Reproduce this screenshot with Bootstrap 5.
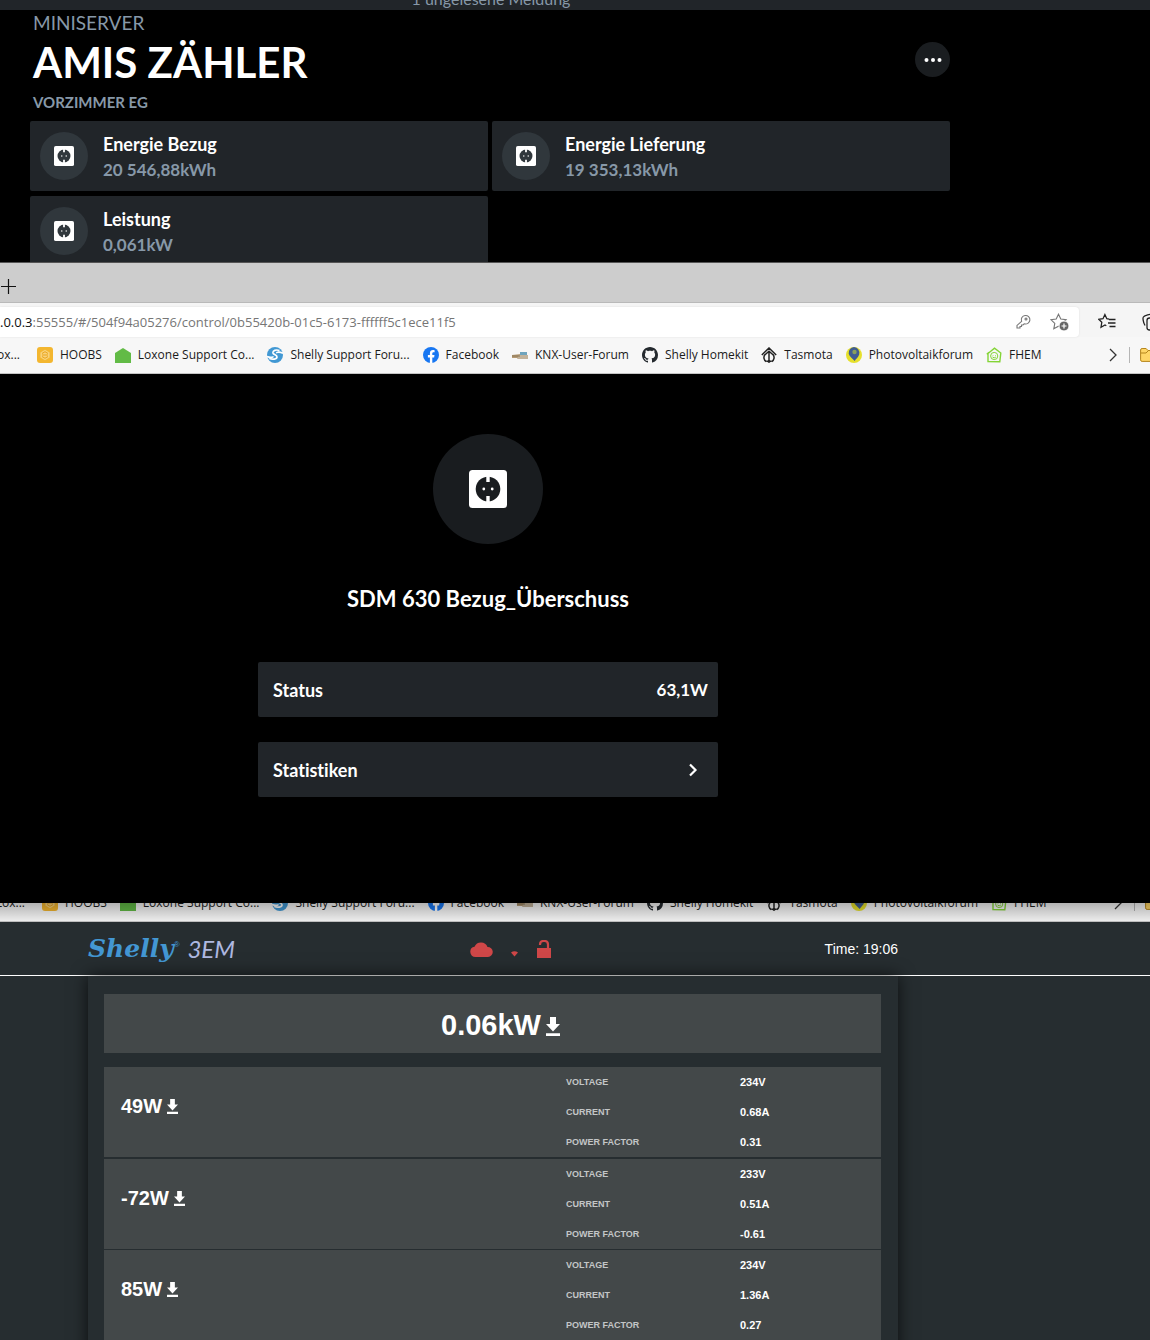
<!DOCTYPE html>
<html lang="de">
<head>
<meta charset="utf-8">
<meta name="viewport" content="width=device-width, initial-scale=1">
<title>AMIS Zähler</title>
<link href="https://cdn.jsdelivr.net/npm/bootstrap@5.3.0/dist/css/bootstrap.min.css" rel="stylesheet">
<style>
  body { background: #000; font-family: Lato, "Open Sans", sans-serif; font-variant-ligatures: none; }
  .shrink-none { flex: none; }

  /* Loxone app */
  .lox-app { height: 262px; }
  .notice-strip { height: 10px; background: #212529; color: #8798a8; font-size: 16px; line-height: 22px; padding-right: 168px; }
  .lox-main { max-width: 920px; margin-left: 30px; }
  .lox-head { height: 111px; padding: 1px 0 0 3px; color: #8798a8; }
  .kicker { font-size: 19px; line-height: 24px; }
  .lox-head h1 { font-size: 42px; line-height: 54px; font-weight: 700; color: #fff; margin: 0; }
  .room { font-size: 15px; line-height: 26px; font-weight: 700; }
  .more-btn { width: 35px; height: 35px; background: #1a1d20; color: #fff; margin-top: 31px; }
  .tile-grid { display: grid; grid-template-columns: 1fr 1fr; gap: 5px 4px; }
  .tile { height: 70px; padding: 0 10px; gap: 15px; background: #212529; border-radius: 2px; font-size: 18px; line-height: 25px; font-weight: 700; color: #fff; }
  .tile-text { padding-top: 2px; }
  .tile-value { color: #8798a8; font-size: 17px; }
  .disc { width: 48px; height: 48px; background: #30373c; color: #30373c; }
  .disc-lg { width: 110px; height: 110px; background: #191c1f; color: #191c1f; }
  .socket { width: 20px; height: 20px; }
  .disc-lg .socket { width: 38px; height: 38px; }

  /* Browser window */
  .chrome-font { font-family: "Open Sans", "Noto Sans", sans-serif; }
  .tab-strip { height: 41px; background: #cdcdcd; border-top: 1px solid #555; border-bottom: 1px solid #b9b9b9; padding-top: 6px; }
  .tab-strip button { width: 17px; }
  .tool-row { height: 34px; background: #f5f5f5; padding-top: 4px; }
  .address { background: #fff; border-radius: 0 4px 4px 0; font-size: 13px; line-height: 30px; color: #111; padding-right: 10px; box-shadow: 0 0 2px #ddd; }
  .address input { color: #767676; font-size: 13px; line-height: 30px; }
  .address input:focus { outline: 1px solid #8ab4f8; }
  .address-icons { gap: 18px; }
  .tool-icons { width: 71px; padding-left: 19px; gap: 25px; }
  .bookmarks { height: 37px; background: #f7f7f7; border-bottom: 1px solid #c4c4c4; font-size: 12px; line-height: 16px; }
  .bookmarks a { color: #1b1b1b; gap: 7px; margin-left: 13px; }
  .bookmarks a.cut-left { width: 20px; margin: 0 4px 0 0; }
  .bookmarks svg { flex: none; }
  .bm-end { width: 43px; gap: 10px; }
  .bm-rule { width: 1px; height: 16px; background: #b5b5b5; }
  .stage { height: 529px; padding-top: 60px; background: #000; color: #fff; }
  .stage-col { max-width: 460px; margin-left: 258px; }
  .stage-col h2 { font-size: 22px; line-height: 28px; font-weight: 700; margin: 41px 0 49px; }
  .stage-row { height: 55px; padding: 1px 10px 0 15px; margin-bottom: 25px; background: #212529; border-radius: 2px; font-size: 18px; font-weight: 700; color: #fff; }
  .stage-value { font-size: 17px; }

  /* Window behind */
  .rear-strip { height: 19px; position: relative; }
  .rear-strip::after { content: ""; position: absolute; inset: 0; background: linear-gradient(rgba(0,0,0,.28), rgba(0,0,0,.03)); pointer-events: none; }
  .rear-strip .bookmarks { margin-right: -5px; }
  .rear-strip .bookmarks a.cut-left { width: 25px; }

  /* Shelly page */
  .shelly { background: #262d30; color: #fff; font-family: "Liberation Sans", Arial, sans-serif; min-height: 0; }
  .shelly-head { height: 54px; border-bottom: 1px solid #fff; }
  .shelly-in { max-width: 810px; margin-left: 88px; }
  .brand { width: 147px; }
  .brand-word { font: italic 700 25px/36px "DejaVu Serif", serif; color: #4397d3; }
  .brand-reg { font-size: 8px; line-height: 8px; color: #4397d3; margin-top: 10px; }
  .brand-model { font: italic 400 24px/36px Lato, sans-serif; color: #aeb8e0; }
  .status-icons { margin-left: 235px; gap: 15px; color: #cf4748; }
  .clock { font-size: 14px; padding-top: 2px; }
  .meter-card { padding: 18px 17px 0 16px; background: #262d30; box-shadow: 0 0 16px rgba(0,0,0,.7); position: relative; }
  .total-box { height: 59px; padding: 5px 0 0 16px; gap: 5px; background: #434849; font-size: 29px; font-weight: 700; margin-bottom: 14px; }
  .phase { height: 90px; background: #434849; margin-bottom: 2px; }
  .phase:last-child { margin: -1px 0 0; }
  .phase-power { padding: 24px 0 0 17px; gap: 5px; font-size: 20px; line-height: 30px; font-weight: 700; }
  .readings { width: 315px; font-size: 11px; line-height: 30px; font-weight: 700; }
  .readings th, .readings td { padding: 0; height: 30px; }
  .readings th { width: 174px; font-size: 9px; color: #c3c6c7; }
</style>
<script src="https://cdn.jsdelivr.net/npm/bootstrap@5.3.0/dist/js/bootstrap.bundle.min.js"></script>
</head>
<body class="d-flex flex-column vh-100 overflow-hidden">

<svg class="d-none" aria-hidden="true">
  <symbol id="i-socket" viewBox="0 0 38 38"><rect width="38" height="38" rx="3.5" fill="#fff"/><circle cx="19" cy="19" r="12.3" fill="currentColor"/><path d="M17.3 5h3.4v7h-3.4zM17.3 26h3.4v7h-3.4z" fill="#fff"/><circle cx="14.8" cy="19" r="1.4" fill="#fff"/><circle cx="23.2" cy="19" r="1.4" fill="#fff"/></symbol>
  <symbol id="i-down" viewBox="0 0 14 19"><path d="M4 0h6v7h4l-7 7.5L0 7h4zM0 16.2h14V19H0z" fill="#fff"/></symbol>
  <symbol id="i-hoobs" viewBox="0 0 16 16"><rect width="16" height="16" rx="3" fill="#f3b62f"/><path d="M8 2.8l4.6 2.6v5.2L8 13.2l-4.6-2.6V5.4z" fill="#f9d27a"/><path d="M5 6.5l3-1.8 3 1.8M5 9.5l3 1.8 3-1.8M5 8h6" stroke="#e9a41b" fill="none"/></symbol>
  <symbol id="i-lox" viewBox="0 0 16 16"><path d="M8 1l8 5v10H0V6z" fill="#62bb46"/></symbol>
  <symbol id="i-shelly" viewBox="0 0 16 16"><circle cx="8" cy="8" r="8" fill="#4198d3"/><path d="M12.5 3.5C9 2.3 5.600 3.500 6 6c.4 2 4 1.800 4 4 0 2.200-4.500 2.800-8 1.300M16 6.200C12.500 4.500 9.500 5 9.800 6.200M0 9.600c3 1.200 6 1 6.200-.3" fill="none" stroke="#fff" stroke-width="1.7"/></symbol>
  <symbol id="i-fb" viewBox="0 0 16 16"><circle cx="8" cy="8" r="8" fill="#1877f2"/><path d="M6.900 16v-5.600H4.900V8h2V6.300c0-2 1.200-3.200 3-3.200.9 0 1.700.2 1.700.2v2h-1c-1 0-1.300.6-1.300 1.200V8h2.200l-.4 2.400H9.300V16z" fill="#fff"/></symbol>
  <symbol id="i-knx" viewBox="0 0 16 16"><path d="M0 8l9-1v4H0z" fill="#b59a74"/><path d="M8 5h7v3H8z" fill="#6fa4bd"/><path d="M7 8h9v4H5z" fill="#c2b29a"/><path d="M0 9h8" stroke="#8a7657"/></symbol>
  <symbol id="i-gh" viewBox="0 0 16 16"><path fill="#24292e" d="M8 0C3.580 0 0 3.580 0 8c0 3.540 2.290 6.530 5.470 7.590.4.070.55-.17.55-.38 0-.19-.01-.82-.01-1.490-2.010.37-2.530-.49-2.690-.94-.09-.23-.48-.94-.82-1.130-.28-.15-.68-.52-.01-.53.63-.01 1.080.58 1.230.82.72 1.210 1.870.87 2.330.66.070-.52.28-.87.51-1.070-1.780-.2-3.640-.89-3.640-3.950 0-.87.31-1.590.82-2.150-.08-.2-.36-1.020.08-2.120 0 0 .67-.21 2.200.82.64-.18 1.320-.27 2-.27s1.360.09 2 .27c1.530-1.040 2.200-.82 2.200-.82.44 1.100.16 1.920.08 2.120.51.56.82 1.270.82 2.150 0 3.070-1.870 3.750-3.650 3.950.29.25.54.73.54 1.480 0 1.070-.01 1.930-.01 2.200 0 .21.15.46.55.38A8.010 8.010 0 0 0 16 8c0-4.420-3.580-8-8-8"/></symbol>
  <symbol id="i-tas" viewBox="0 0 16 16"><path d="M.8 8L8 1l7.200 7M5.200 14.600A4.800 4.800 0 0 1 4 7.500M10.800 14.600A4.800 4.800 0 0 0 12 7.500M8 5.500V16M4 7.800l4-3.600 4 3.600M5.500 14l2.500.8 2.500-.8" fill="none" stroke="#222" stroke-width="1.500"/></symbol>
  <symbol id="i-pv" viewBox="0 0 16 16"><circle cx="8" cy="8" r="8" fill="#e6e02c"/><path d="M8 0a6 6 0 0 1 5.200 7.500C12.300 10.600 9.600 12 8.700 14 6.500 11.500 3.400 9.700 2.700 6.700A5.800 5.800 0 0 1 8 0z" fill="#3f5c92"/><circle cx="8.500" cy="5" r="2.200" fill="#8aa05b"/></symbol>
  <symbol id="i-fhem" viewBox="0 0 16 16"><path d="M2 6.500L8.500 1.200 14.800 6l-1 8.800L2 14.500zM.8 7.200L3 5.200" fill="none" stroke="#84d436" stroke-width="1.400"/><circle cx="8.200" cy="9" r="3.600" fill="none" stroke="#84d436"/><path d="M6.500 10q1.700 1.700 3.400 0M7 8v.6M9.500 8v.6" fill="none" stroke="#84d436"/></symbol>
  <symbol id="i-chev" viewBox="0 0 12 16"><path d="M3 2l6 6-6 6" fill="none" stroke="#333" stroke-width="1.300"/></symbol>
  <symbol id="i-folder" viewBox="0 0 18 16"><path d="M.6 3q0-1.500 1.500-1.500h4L8 3.500h8q1.400 0 1.400 1.400v8q0 1.500-1.500 1.500H2.100Q.6 14.400.6 12.900z" fill="#ffd667" stroke="#b5851c"/><path d="M1 6h5l2-2" fill="none" stroke="#b5851c"/></symbol>
</svg>

<section class="lox-app shrink-none overflow-hidden">
  <div class="notice-strip d-flex align-items-end justify-content-center overflow-hidden"><span>1 ungelesene Meldung</span></div>
  <main class="lox-main">
    <header class="lox-head d-flex justify-content-between">
      <div>
        <div class="kicker">MINISERVER</div>
        <h1>AMIS ZÄHLER</h1>
        <div class="room">VORZIMMER EG</div>
      </div>
      <button type="button" class="more-btn btn rounded-circle border-0 p-0 d-flex align-items-center justify-content-center" aria-label="Mehr">
        <svg width="18" height="4" viewBox="0 0 18 4" fill="currentColor"><circle cx="2.500" cy="2" r="2"/><circle cx="9" cy="2" r="2"/><circle cx="15.500" cy="2" r="2"/></svg>
      </button>
    </header>
    <div class="tile-grid">
      <div class="tile d-flex align-items-center">
        <span class="disc rounded-circle d-flex align-items-center justify-content-center"><svg class="socket"><use href="#i-socket"/></svg></span>
        <div class="tile-text"><div>Energie Bezug</div><div class="tile-value">20 546,88kWh</div></div>
      </div>
      <div class="tile d-flex align-items-center">
        <span class="disc rounded-circle d-flex align-items-center justify-content-center"><svg class="socket"><use href="#i-socket"/></svg></span>
        <div class="tile-text"><div>Energie Lieferung</div><div class="tile-value">19 353,13kWh</div></div>
      </div>
      <div class="tile d-flex align-items-center">
        <span class="disc rounded-circle d-flex align-items-center justify-content-center"><svg class="socket"><use href="#i-socket"/></svg></span>
        <div class="tile-text"><div>Leistung</div><div class="tile-value">0,061kW</div></div>
      </div>
    </div>
  </main>
</section>

<section class="shrink-none">
  <div class="chrome-font">
    <div class="tab-strip">
      <button type="button" class="btn border-0 rounded-0 p-0 d-flex" aria-label="Neuer Tab"><svg width="17" height="34" viewBox="0 0 17 34"><path d="M1 17.500h15M8.500 10v15" stroke="#111" stroke-width="1.200"/></svg></button>
    </div>
    <div class="tool-row d-flex">
      <div class="address d-flex align-items-center flex-grow-1">
        <label for="url">.0.0.3</label>
        <input id="url" type="text" class="border-0 p-0 bg-transparent flex-grow-1" value=":55555/#/504f94a05276/control/0b55420b-01c5-6173-ffffff5c1ece11f5">
        <div class="address-icons d-flex align-items-center">
          <svg width="18" height="18" viewBox="0 0 18 18" fill="none" stroke="#777" stroke-width="1.100"><path d="M7.600 8.300A4.300 4.300 0 1 1 10.200 10.800L9 12H7.500v1.500H6V15H3v-2.600z"/><circle cx="12" cy="6" r="1"/></svg>
          <svg width="19" height="18" viewBox="0 0 19 18"><path d="M8.500 1.200l2.300 4.900 5.300.6-3.900 3.700 1 5.400-4.700-2.600-4.700 2.600 1-5.400L.9 6.700l5.300-.6z" fill="none" stroke="#777" stroke-width="1.100"/><circle cx="14" cy="13" r="5" fill="#666" stroke="#fff"/><path d="M11.500 13h5M14 10.500v5" stroke="#fff" stroke-width="1.200"/></svg>
        </div>
      </div>
      <div class="tool-icons d-flex align-items-center overflow-hidden shrink-none">
        <svg class="shrink-none" width="19" height="18" viewBox="0 0 19 18" fill="none" stroke="#222" stroke-width="1.300"><path d="M11 6.200L8.800 5.700 6.900 1.600 5 5.700l-4.300.6 3.100 3-.8 4.900 4-2.200 1.300.8M11 6.500h6.500M10 10h7.500M11.500 13.500h6"/></svg>
        <svg class="shrink-none" width="18" height="18" viewBox="0 0 18 18" fill="none" stroke="#222" stroke-width="1.300"><path d="M3 12.500C1 9 .8 5 1.200 4.200 2 2.500 9 .6 11 1.500c1 .4 1.500 2 1.700 2.500"/><rect x="5" y="5" width="12" height="12" rx="2.500"/></svg>
      </div>
    </div>
    <nav class="bookmarks d-flex align-items-center text-nowrap" aria-label="Favoriten">
      <a href="#" class="cut-left d-flex justify-content-end overflow-hidden text-decoration-none">Lox...</a>
      <a href="#" class="d-flex align-items-center text-decoration-none"><svg width="16" height="16"><use href="#i-hoobs"/></svg>HOOBS</a>
      <a href="#" class="d-flex align-items-center text-decoration-none"><svg width="16" height="16"><use href="#i-lox"/></svg>Loxone Support Co...</a>
      <a href="#" class="d-flex align-items-center text-decoration-none"><svg width="16" height="16"><use href="#i-shelly"/></svg>Shelly Support Foru...</a>
      <a href="#" class="d-flex align-items-center text-decoration-none"><svg width="16" height="16"><use href="#i-fb"/></svg>Facebook</a>
      <a href="#" class="d-flex align-items-center text-decoration-none"><svg width="16" height="16"><use href="#i-knx"/></svg>KNX-User-Forum</a>
      <a href="#" class="d-flex align-items-center text-decoration-none"><svg width="16" height="16"><use href="#i-gh"/></svg>Shelly Homekit</a>
      <a href="#" class="d-flex align-items-center text-decoration-none"><svg width="16" height="16"><use href="#i-tas"/></svg>Tasmota</a>
      <a href="#" class="d-flex align-items-center text-decoration-none"><svg width="16" height="16"><use href="#i-pv"/></svg>Photovoltaikforum</a>
      <a href="#" class="d-flex align-items-center text-decoration-none"><svg width="16" height="16"><use href="#i-fhem"/></svg>FHEM</a>
      <div class="bm-end ms-auto d-flex align-items-center overflow-hidden shrink-none"><svg width="12" height="16"><use href="#i-chev"/></svg><span class="bm-rule shrink-none"></span><svg width="18" height="16"><use href="#i-folder"/></svg></div>
    </nav>
  </div>
  <div class="stage">
    <div class="stage-col">
      <div class="disc-lg rounded-circle d-flex align-items-center justify-content-center mx-auto"><svg class="socket"><use href="#i-socket"/></svg></div>
      <h2 class="text-center">SDM 630 Bezug_Überschuss</h2>
      <div class="stage-row d-flex align-items-center justify-content-between"><span>Status</span><span class="stage-value">63,1W</span></div>
      <a href="#" class="stage-row d-flex align-items-center justify-content-between text-decoration-none"><span>Statistiken</span><svg class="me-2" width="14" height="16" viewBox="0 0 14 16"><path d="M4 2.500L9.500 8 4 13.500" fill="none" stroke="#fff" stroke-width="2.200"/></svg></a>
    </div>
  </div>
</section>

<div class="rear-strip d-flex flex-column justify-content-end overflow-hidden shrink-none chrome-font">
  <nav class="bookmarks d-flex align-items-center text-nowrap shrink-none" aria-label="Favoriten, hinteres Fenster">
    <a href="#" class="cut-left d-flex justify-content-end overflow-hidden text-decoration-none">Lox...</a>
    <a href="#" class="d-flex align-items-center text-decoration-none"><svg width="16" height="16"><use href="#i-hoobs"/></svg>HOOBS</a>
    <a href="#" class="d-flex align-items-center text-decoration-none"><svg width="16" height="16"><use href="#i-lox"/></svg>Loxone Support Co...</a>
    <a href="#" class="d-flex align-items-center text-decoration-none"><svg width="16" height="16"><use href="#i-shelly"/></svg>Shelly Support Foru...</a>
    <a href="#" class="d-flex align-items-center text-decoration-none"><svg width="16" height="16"><use href="#i-fb"/></svg>Facebook</a>
    <a href="#" class="d-flex align-items-center text-decoration-none"><svg width="16" height="16"><use href="#i-knx"/></svg>KNX-User-Forum</a>
    <a href="#" class="d-flex align-items-center text-decoration-none"><svg width="16" height="16"><use href="#i-gh"/></svg>Shelly Homekit</a>
    <a href="#" class="d-flex align-items-center text-decoration-none"><svg width="16" height="16"><use href="#i-tas"/></svg>Tasmota</a>
    <a href="#" class="d-flex align-items-center text-decoration-none"><svg width="16" height="16"><use href="#i-pv"/></svg>Photovoltaikforum</a>
    <a href="#" class="d-flex align-items-center text-decoration-none"><svg width="16" height="16"><use href="#i-fhem"/></svg>FHEM</a>
    <div class="bm-end ms-auto d-flex align-items-center overflow-hidden shrink-none"><svg width="12" height="16"><use href="#i-chev"/></svg><span class="bm-rule shrink-none"></span><svg width="18" height="16"><use href="#i-folder"/></svg></div>
  </nav>
</div>

<section class="shelly flex-grow-1 overflow-hidden">
  <header class="shelly-head">
    <div class="shelly-in d-flex align-items-center h-100">
      <div class="brand d-flex align-items-start justify-content-between"><span class="d-flex"><span class="brand-word">Shelly</span><span class="brand-reg">®</span></span><span class="brand-model">3EM</span></div>
      <div class="status-icons d-flex align-items-center">
        <svg width="23" height="16" viewBox="0 0 23 16" fill="currentColor"><path d="M5.500 16a5.200 5.200 0 0 1-1-10.300A7 7 0 0 1 17.500 6a5 5 0 0 1 .5 10z"/></svg>
        <svg width="14" height="18" viewBox="0 0 14 18" fill="currentColor"><path d="M3 12.500q3.500-2.600 7 0L6.500 16.500z"/></svg>
        <svg width="14" height="18" viewBox="0 0 14 18"><path d="M0 8h14v10H0z" fill="currentColor"/><path d="M3 5V4.500Q3 1 6.500 1h1Q11 1 11 4.500V8" fill="none" stroke="currentColor" stroke-width="2.200"/></svg>
      </div>
      <div class="clock ms-auto">Time: 19:06</div>
    </div>
  </header>
  <div class="meter-card shelly-in h-100">
    <div class="total-box d-flex align-items-center justify-content-center"><span>0.06kW</span><svg width="14" height="19"><use href="#i-down"/></svg></div>
    <div class="phase d-flex justify-content-between">
      <div class="phase-power d-flex align-self-start align-items-center"><span>49W</span><svg width="11" height="15"><use href="#i-down"/></svg></div>
      <table class="readings"><tbody>
        <tr><th scope="row">VOLTAGE</th><td>234V</td></tr>
        <tr><th scope="row">CURRENT</th><td>0.68A</td></tr>
        <tr><th scope="row">POWER FACTOR</th><td>0.31</td></tr>
      </tbody></table>
    </div>
    <div class="phase d-flex justify-content-between">
      <div class="phase-power d-flex align-self-start align-items-center"><span>-72W</span><svg width="11" height="15"><use href="#i-down"/></svg></div>
      <table class="readings"><tbody>
        <tr><th scope="row">VOLTAGE</th><td>233V</td></tr>
        <tr><th scope="row">CURRENT</th><td>0.51A</td></tr>
        <tr><th scope="row">POWER FACTOR</th><td>-0.61</td></tr>
      </tbody></table>
    </div>
    <div class="phase d-flex justify-content-between">
      <div class="phase-power d-flex align-self-start align-items-center"><span>85W</span><svg width="11" height="15"><use href="#i-down"/></svg></div>
      <table class="readings"><tbody>
        <tr><th scope="row">VOLTAGE</th><td>234V</td></tr>
        <tr><th scope="row">CURRENT</th><td>1.36A</td></tr>
        <tr><th scope="row">POWER FACTOR</th><td>0.27</td></tr>
      </tbody></table>
    </div>
  </div>
</section>
</body>
</html>
